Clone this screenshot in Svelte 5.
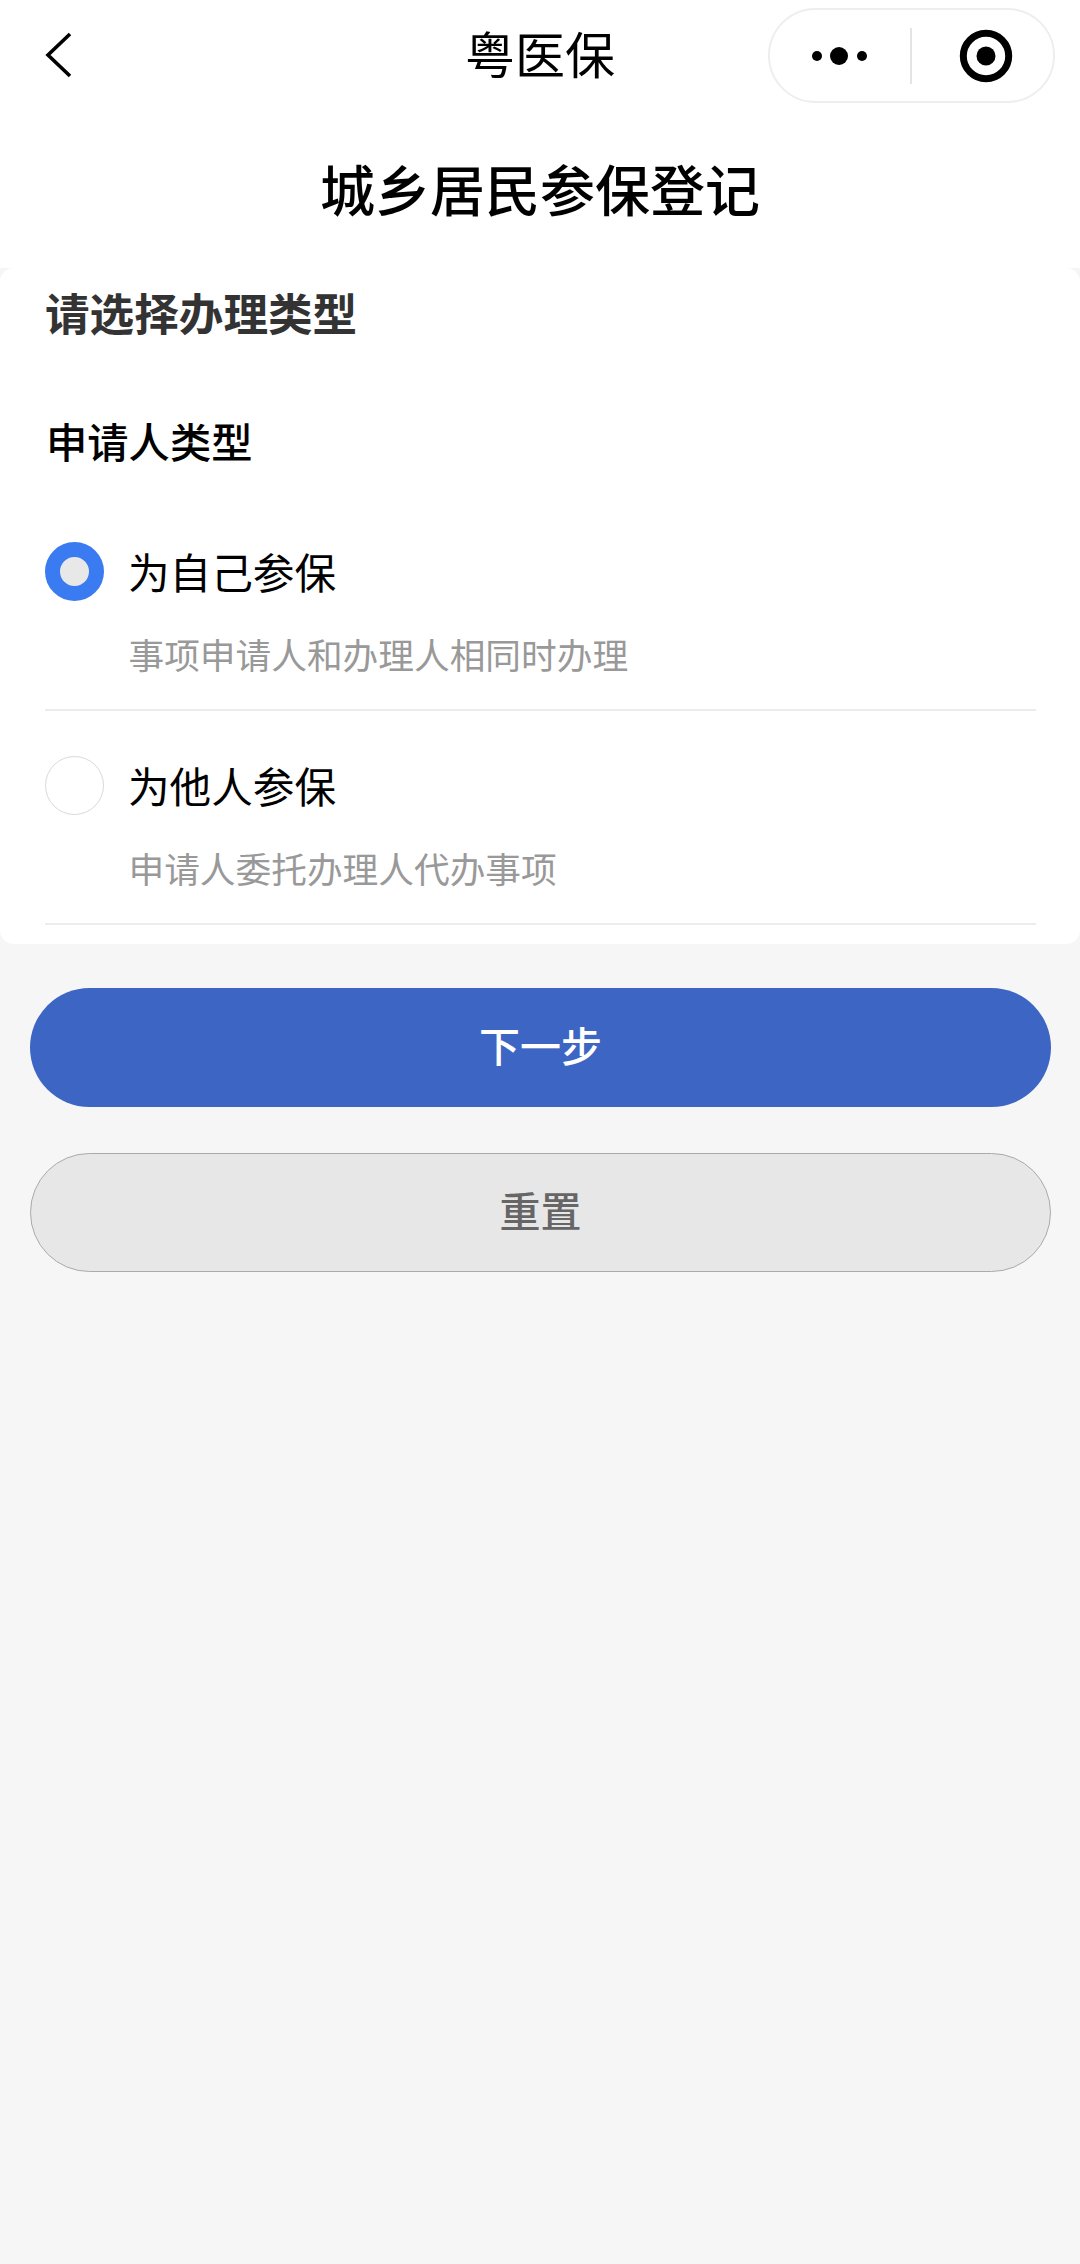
<script>
  const options = [
    { label: '为自己参保', desc: '事项申请人和办理人相同时办理', checked: true },
    { label: '为他人参保', desc: '申请人委托办理人代办事项', checked: false }
  ];
</script>

<div class="page">
  <header class="top">
    <div class="nav">
      <svg class="back" width="30" height="48" viewBox="0 0 30 48" aria-hidden="true">
        <path d="M26 3 L4 24 L26 45" fill="none" stroke="#000" stroke-width="3.6" />
      </svg>
      <div class="nav-title">粤医保</div>
      <div class="capsule">
        <svg class="dots" width="70" height="24" viewBox="0 0 70 24" aria-hidden="true">
          <circle cx="11" cy="12" r="5" fill="#000" />
          <circle cx="33" cy="12" r="9" fill="#000" />
          <circle cx="56" cy="12" r="5" fill="#000" />
        </svg>
        <span class="sep"></span>
        <svg class="target" width="56" height="56" viewBox="0 0 56 56" aria-hidden="true">
          <circle cx="28" cy="28" r="22.7" fill="none" stroke="#000" stroke-width="7" />
          <circle cx="28" cy="28" r="9.5" fill="#000" />
        </svg>
      </div>
    </div>
    <h1 class="page-title">城乡居民参保登记</h1>
  </header>

  <section class="card">
    <h2 class="card-title">请选择办理类型</h2>
    <h3 class="field-title">申请人类型</h3>
    {#each options as o}
      <div class="option">
        <div class="option-main">
          <span class="radio" class:checked={o.checked}></span>
          <span class="label">{o.label}</span>
        </div>
        <div class="desc">{o.desc}</div>
      </div>
    {/each}
  </section>

  <div class="actions">
    <button class="btn primary">下一步</button>
    <button class="btn ghost">重置</button>
  </div>
</div>

<style>
  :global(body) {
    margin: 0;
    background: #f6f6f7;
  }
  .page {
    height: 2264px;
    background: #f6f6f7;
    font-family: "Noto Sans CJK SC", "Noto Sans", sans-serif;
    color: #000;
    overflow: hidden;
  }
  .top {
    background: #fff;
    height: 268px;
  }
  .nav {
    height: 110px;
    display: grid;
    grid-template-columns: 1fr auto 1fr;
    align-items: start;
    padding: 0 25px;
    box-sizing: border-box;
  }
  .back {
    margin: 31px 0 0 19px;
    display: block;
  }
  .nav-title {
    font-size: 50px;
    line-height: 56px;
    margin-top: 24px;
  }
  .capsule {
    justify-self: end;
    margin-top: 8px;
    width: 287px;
    height: 95px;
    box-sizing: border-box;
    border: 2px solid #eeeeee;
    border-radius: 48px;
    display: flex;
    align-items: center;
    background: #fff;
  }
  .dots {
    margin-left: 36px;
    flex: none;
  }
  .sep {
    width: 2px;
    height: 56px;
    background: #e4e4e4;
    margin-left: 34px;
    flex: none;
  }
  .target {
    margin-left: 46px;
    flex: none;
  }
  .page-title {
    margin: 0;
    padding-top: 47px;
    text-align: center;
    font-size: 55px;
    line-height: 60px;
    font-weight: 500;
  }
  .card {
    background: #fff;
    border-radius: 14px;
    height: 676px;
    padding: 0 44px 0 45px;
    box-sizing: border-box;
  }
  .card-title {
    margin: 0;
    padding-top: 17px;
    font-size: 44.6px;
    line-height: 54px;
    font-weight: 700;
    color: #333;
  }
  .field-title {
    margin: 0;
    padding: 74px 0 30px 1px;
    font-size: 41.3px;
    line-height: 54px;
    font-weight: 500;
  }
  .option {
    height: 214px;
    border-bottom: 2px solid #ececec;
    box-sizing: border-box;
    padding-top: 45px;
  }
  .option-main {
    display: flex;
    align-items: center;
    gap: 24px;
  }
  .radio {
    width: 59px;
    height: 59px;
    box-sizing: border-box;
    border-radius: 50%;
    border: 1px solid #d9d9d9;
    background: #fff;
    flex: none;
  }
  .radio.checked {
    border: 15px solid #3b7bf2;
    background: #e8e8e8;
  }
  .label {
    font-size: 41.6px;
    line-height: 59px;
  }
  .desc {
    margin: 28px 0 0 83.5px;
    font-size: 35.7px;
    line-height: 50px;
    color: #999;
  }
  .actions {
    padding: 44px 29px 0 30px;
    display: flex;
    flex-direction: column;
    gap: 46px;
  }
  .btn {
    height: 119px;
    border-radius: 60px;
    font-family: inherit;
    font-size: 41px;
    padding: 0 0 8px;
    box-sizing: border-box;
  }
  .primary {
    background: #3d65c4;
    border: none;
    color: #fff;
    font-weight: 500;
  }
  .ghost {
    background: #e7e7e7;
    border: 1px solid #aaa;
    color: #666;
    font-weight: 500;
  }
</style>
